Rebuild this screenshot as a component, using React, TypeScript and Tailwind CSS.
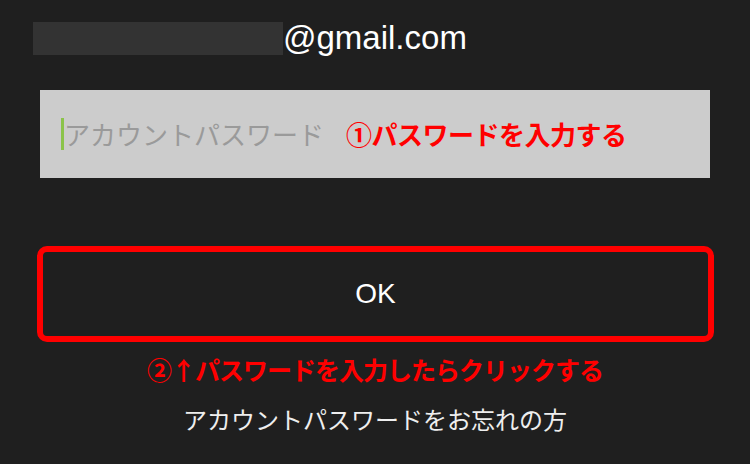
const App = () => {
  return (
    <div className="w-[750px] h-[464px] bg-[#1f1f1f] overflow-hidden flex flex-col [font-family:'Noto_Sans_CJK_JP',sans-serif]">
      {/* email */}
      <div className="ml-[33px] mt-[22px] h-[33px] flex items-center">
        <div className="w-[250px] h-[33px] bg-[#333333]" />
        <span className="text-white text-[33px] leading-none [font-family:'Liberation_Sans',sans-serif] -mt-[2px]">
          @gmail.com
        </span>
      </div>

      {/* password field */}
      <div className="mt-[35px] mx-[40px] h-[88px] bg-[#cccccc] flex items-center pl-[21px]">
        <div className="w-[3px] h-[32px] bg-[#8bc34a]" />
        <span className="text-[#9a9a9a] text-[26px] leading-none">
          アカウントパスワード
        </span>
        <span className="ml-[22px] text-[#ff0000] text-[26px] leading-none font-bold tracking-[-0.5px]">
          ①パスワードを入力する
        </span>
      </div>

      {/* OK button */}
      <button
        type="button"
        className="mt-[68px] ml-[37px] w-[677px] h-[96px] border-[6px] border-[#ff0000] rounded-[10px] flex items-center justify-center"
      >
        <span className="text-white text-[28px] [font-family:'Liberation_Sans',sans-serif]">OK</span>
      </button>

      <p className="mt-[12px] text-center text-[#ff0000] text-[25px] leading-[30px] font-bold tracking-[-1px]">
        ②↑パスワードを入力したらクリックする
      </p>

      <p className="mt-[20px] text-center text-[#eeeeee] text-[24px] leading-[30px]">
        アカウントパスワードをお忘れの方
      </p>
    </div>
  );
};

export default App;
